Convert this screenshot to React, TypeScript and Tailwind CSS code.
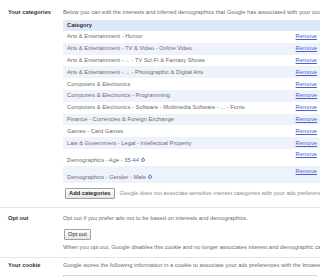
import type { ReactNode } from "react";

type Row = {
  label: string;
  help?: boolean;
};

const ROWS: Row[] = [
  { label: "Arts & Entertainment - Humor" },
  { label: "Arts & Entertainment - TV & Video - Online Video" },
  { label: "Arts & Entertainment - ... - TV Sci-Fi & Fantasy Shows" },
  { label: "Arts & Entertainment - ... - Photographic & Digital Arts" },
  { label: "Computers & Electronics" },
  { label: "Computers & Electronics - Programming" },
  { label: "Computers & Electronics - Software - Multimedia Software - ... - Fonts" },
  { label: "Finance - Currencies & Foreign Exchange" },
  { label: "Games - Card Games" },
  { label: "Law & Government - Legal - Intellectual Property" },
  { label: "Demographics - Age - 35-44", help: true },
  { label: "Demographics - Gender - Male", help: true },
];

function HelpIcon() {
  return (
    <span className="ml-[2px] inline-flex h-[4px] w-[4px] -translate-y-[1px] items-center justify-center rounded-full border-[0.5px] border-[#5b86d9] text-[3px] leading-none text-[#5b86d9]">
      ?
    </span>
  );
}

function Remove() {
  return <span className="pr-[3px] text-[#4a5fd0] underline">Remove</span>;
}

function Section({
  label,
  children,
  className,
}: {
  label: string;
  children: ReactNode;
  className?: string;
}) {
  return (
    <div className={`flex ${className ?? ""}`}>
      <div className="w-[63px] shrink-0 pl-[8px] font-bold text-[#333]">{label}</div>
      <div className="min-w-0 flex-1">{children}</div>
    </div>
  );
}

function Button({ children, bold }: { children: ReactNode; bold?: boolean }) {
  return (
    <span
      className={`inline-flex h-[11px] items-center rounded-[1px] border border-[#a0a0a0] bg-gradient-to-b from-white to-[#e6e6e6] px-[3px] text-[#222] ${
        bold ? "font-bold" : ""
      }`}
    >
      {children}
    </span>
  );
}

export default function App() {
  return (
    <div className="h-[277px] w-[320px] overflow-hidden bg-white font-['Liberation_Sans',Arial,sans-serif] text-[5.75px] leading-[7px] text-[#6b6b6b]">
      {/* Your categories */}
      <Section label="Your categories" className="border-b border-[#dfe4ee] pt-[9px] pb-[8px]">
        <div className="whitespace-nowrap">
          Below you can edit the interests and inferred demographics that Google has associated with your cookie.
        </div>
        <div className="mt-[4px] w-[257px]">
          <div className="flex h-[11px] items-center bg-[#dfe8f7] pl-[4px] font-bold text-[#333]">
            Category
          </div>
          {ROWS.map((row, i) => (
            <div
              key={row.label}
              className={`flex justify-between whitespace-nowrap pl-[4px] ${
                i % 2 === 1 ? "bg-[#eef3fb]" : "bg-white"
              } ${row.help ? "h-[17px]" : "h-[11.8px] items-center"}`}
            >
              {row.help ? (
                <>
                  <span className="flex items-center pt-[6.5px]">
                    {row.label}
                    <HelpIcon />
                  </span>
                  <span className="pt-[2.5px]">
                    <Remove />
                  </span>
                </>
              ) : (
                <>
                  <span>{row.label}</span>
                  <Remove />
                </>
              )}
            </div>
          ))}
        </div>
        <div className="mt-[5px] flex items-center whitespace-nowrap pl-[2px]">
          <Button bold>Add categories</Button>
          <span className="ml-[5px] text-[#8a8a8a]">
            Google does not associate sensitive interest categories with your ads preferences.
          </span>
        </div>
      </Section>

      {/* Opt out */}
      <Section label="Opt out" className="border-b border-[#dfe4ee] pt-[7px] pb-[6px]">
        <div className="whitespace-nowrap">
          Opt out if you prefer ads not to be based on interests and demographics.
        </div>
        <div className="mt-[7px] pl-[1px]">
          <Button>Opt out</Button>
        </div>
        <div className="mt-[4px] whitespace-nowrap">
          When you opt out, Google disables this cookie and no longer associates interest and demographic categories with your browser.
        </div>
      </Section>

      {/* Your cookie */}
      <Section label="Your cookie" className="pt-[4.5px]">
        <div className="whitespace-nowrap">
          Google stores the following information in a cookie to associate your ads preferences with the browser you are using.
        </div>
        <div className="mt-[6px] h-[20px] w-[254px] border border-[#d4d8de]" />
      </Section>
    </div>
  );
}
